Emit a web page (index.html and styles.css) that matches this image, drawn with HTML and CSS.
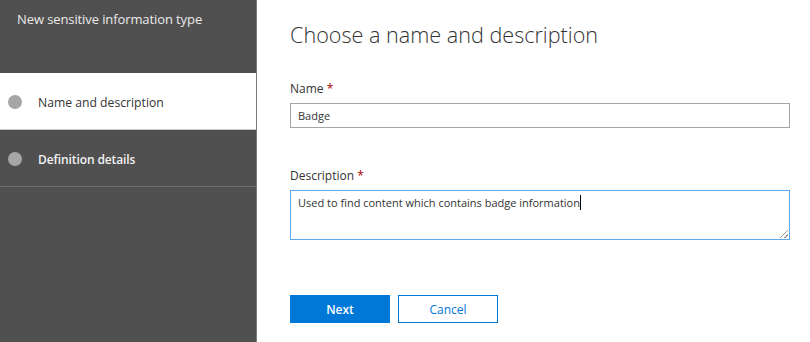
FILE: index.html
```html
<!DOCTYPE html>
<html lang="en">
<head>
<meta charset="utf-8">
<title>New sensitive information type</title>
<link rel="stylesheet" href="styles.css">
</head>
<body>
<div class="wizard">
  <aside class="sidebar">
    <div class="sidebar-title">New sensitive information type</div>
    <ul class="steps">
      <li class="step step-current"><span class="dot"></span><span class="step-label">Name and description</span></li>
      <li class="step"><span class="dot"></span><span class="step-label step-bold">Definition details</span></li>
    </ul>
  </aside>
  <main class="content">
    <h1 class="heading">Choose a name and description</h1>
    <div class="field field-name">
      <div class="label">Name <span class="req">*</span></div>
      <div class="input">Badge</div>
    </div>
    <div class="field field-desc">
      <div class="label">Description <span class="req">*</span></div>
      <div class="textarea">Used to find content which contains badge information<span class="caret"></span>
        <span class="grip"></span>
      </div>
    </div>
    <div class="actions">
      <button class="btn btn-primary" type="button">Next</button>
      <button class="btn btn-secondary" type="button">Cancel</button>
    </div>
  </main>
</div>
</body>
</html>
```

FILE: styles.css
```css
* { box-sizing: border-box; }
html, body { margin: 0; padding: 0; height: 100%; }
body {
  font-family: "Open Sans", "Noto Sans", "Liberation Sans", sans-serif;
  background: #ffffff;
  color: #333333;
}
.wizard {
  display: flex;
  height: 342px;
}
.sidebar {
  width: 257px;
  flex: 0 0 257px;
  background: #505050;
  border-right: 1px solid #7a7a7a;
}
.sidebar-title {
  height: 73px;
  padding: 10px 0 0 17px;
  font-size: 13px;
  line-height: 18px;
  color: #eaeaea;
  letter-spacing: -0.1px;
}
.steps {
  list-style: none;
  margin: 0;
  padding: 0;
}
.step {
  display: flex;
  align-items: center;
  height: 57px;
  border-bottom: 1px solid #6c6c6c;
  padding-left: 8px;
  color: #f2f2f2;
}
.step-current {
  background: #ffffff;
  color: #333333;
  border-bottom-color: #c8c8c8;
}
.dot {
  width: 14px;
  height: 14px;
  border-radius: 50%;
  background: #a6a6a6;
  flex: 0 0 14px;
  margin-right: 16px;
  margin-top: 1px;
}
.step-label {
  font-size: 12.2px;
  line-height: 18px;
  margin-top: 4px;
}
.step-bold { font-weight: 600; font-size: 12px; letter-spacing: -0.1px; }
.content {
  flex: 1;
  padding: 20px 0 0 33px;
}
.heading {
  margin: 0;
  font-size: 21.6px;
  line-height: 29px;
  font-weight: 300;
  color: #333333;
}
.field-name { margin-top: 31px; }
.field-desc { margin-top: 39px; }
.label {
  font-size: 12px;
  line-height: 18px;
  color: #333333;
  margin-bottom: 5px;
}
.req { color: #a80000; }
.input {
  width: 500px;
  height: 25px;
  border: 1px solid #a6a6a6;
  padding: 0 7px;
  font-size: 11px;
  line-height: 23px;
  color: #333333;
}
.textarea {
  position: relative;
  width: 500px;
  height: 50px;
  border: 1px solid #5ea8ee;
  padding: 3px 7px;
  font-size: 11px;
  line-height: 17px;
  color: #333333;
}
.caret {
  display: inline-block;
  width: 1px;
  height: 15px;
  background: #000000;
  vertical-align: -3px;
}
.grip {
  position: absolute;
  right: 1px;
  bottom: 1px;
  width: 8px;
  height: 8px;
  background: linear-gradient(135deg, transparent 45%, #9a9a9a 45%, #9a9a9a 55%, transparent 55%, transparent 72%, #9a9a9a 72%, #9a9a9a 82%, transparent 82%);
}
.actions {
  display: flex;
  gap: 8px;
  margin-top: 55px;
}
.btn {
  width: 100px;
  height: 28px;
  font-family: inherit;
  font-size: 12px;
  cursor: pointer;
  padding: 0;
}
.btn-primary {
  background: #0078d7;
  border: 1px solid #0078d7;
  color: #ffffff;
  font-weight: 600;
}
.btn-secondary {
  background: #ffffff;
  border: 1px solid #0078d7;
  color: #0078d7;
}
```
